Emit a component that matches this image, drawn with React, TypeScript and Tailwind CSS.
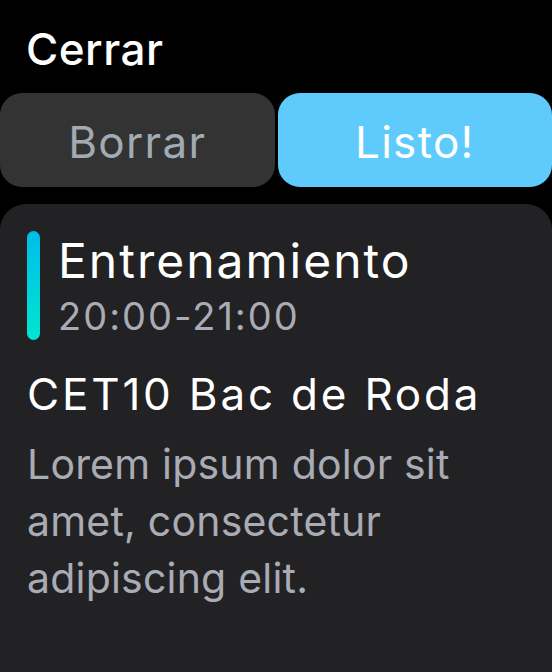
export default function App() {
  return (
    <div className="w-[552px] h-[672px] bg-black overflow-hidden flex flex-col" style={{ fontFamily: 'Inter, "Noto Sans", sans-serif' }}>
      <div className="h-[93px] shrink-0 pl-[26px] pt-[27px]">
        <div className="text-[44px] leading-[44px] text-white font-medium tracking-[0.5px]">Cerrar</div>
      </div>
      <div className="flex gap-[3px] h-[94px] shrink-0">
        <div className="flex-1 rounded-[22px] bg-[#333333] flex items-center justify-center pt-[4px] text-[44px] leading-[44px] tracking-[1.3px] text-[#a0abb3]">Borrar</div>
        <div className="flex-1 rounded-[22px] bg-[#5ecbfc] flex items-center justify-center pt-[4px] text-[44px] leading-[44px] tracking-[1.3px] text-white">Listo!</div>
      </div>
      <div className="mt-[17px] flex-1 rounded-t-[26px] bg-[#222224] pl-[27px] pr-4 pt-[27px]">
        <div className="flex gap-[18px]">
          <div className="w-[13px] h-[109px] shrink-0 rounded-full bg-gradient-to-b from-[#00bce9] to-[#00e6cf]" />
          <div className="flex flex-col">
            <div className="mt-[4px] text-[48px] leading-[52px] tracking-[2px] text-white">Entrenamiento</div>
            <div className="mt-[7px] text-[38px] leading-[44px] tracking-[2px] text-[#a9abb5]">20:00-21:00</div>
          </div>
        </div>
        <div className="mt-[28px] text-[44px] leading-[52px] tracking-[2.8px] text-white">CET10 Bac de Roda</div>
        <div className="mt-[16px] text-[41px] leading-[57px] tracking-[0.2px] text-[#a9abb5] w-[490px]">Lorem ipsum dolor sit amet, consectetur adipiscing elit.</div>
      </div>
    </div>
  );
}
